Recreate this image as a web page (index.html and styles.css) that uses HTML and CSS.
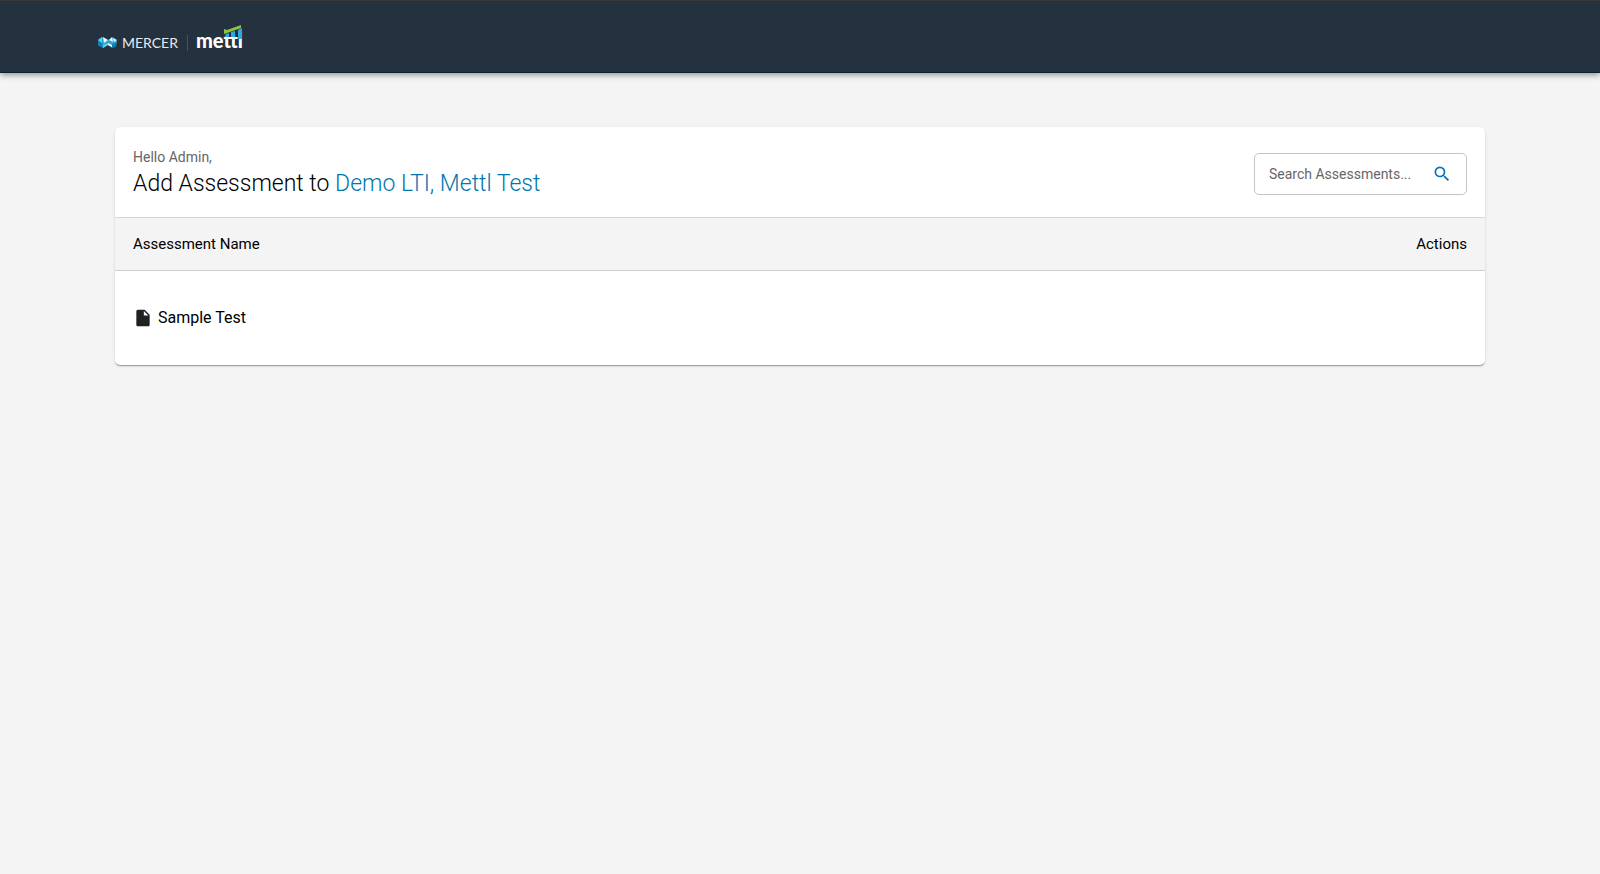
FILE: index.html
```html
<!DOCTYPE html>
<html lang="en">
<head>
<meta charset="utf-8">
<meta name="viewport" content="width=device-width, initial-scale=1">
<title>Add Assessment</title>
<link rel="stylesheet" href="styles.css">
</head>
<body>
<header class="topbar">
  <svg class="logo" width="148" height="32" viewBox="0 0 148 32" role="img" aria-label="Mercer Mettl">
    <path fill="#25a5d6" d="M0 14l4-3 6 3 5-3 4 4-1 5-4 2-4-3-5 3-5-3z"/>
    <path fill="#0f7fb5" d="M0 14l4 3 1 5-5-3zM14 18l4-1v3l-4 2z"/>
    <path fill="#5fcbea" d="M0 14l4-3v6zM5 19l5-2v2l-5 3z"/>
    <path fill="#f2fbff" d="M5 11l5 3-4 3zM11 14l3-3 1 5zM15 12l4 2-3 2zM10 17l4 2v2l-4-2z"/>
    <text class="logo-mercer" x="24" y="22">MERCER</text>
    <path stroke="#46535f" d="M89.500 9v16"/>
    <text class="logo-mettl" x="98" y="22">mettl</text>
    <path fill="#2ba9e0" d="M128 8l3-1v4h-3zM133 6l4-1v6h-4zM140 4l4-2v11h-4z"/>
    <path fill="#8cc63f" d="M126 3l3 1 14-5v3l-14 5-3 1z"/>
  </svg>
</header>
<main class="page">
  <section class="card">
    <div class="card-head">
      <div>
        <p class="greeting">Hello Admin,</p>
        <h1 class="title">Add Assessment to <span class="context">Demo LTI, Mettl Test</span></h1>
      </div>
      <form class="search" role="search">
        <input class="search-input" type="text" aria-label="Search Assessments" placeholder="Search Assessments...">
        <button class="search-button" type="button" aria-label="Search">
          <svg width="20" height="20" viewBox="0 0 24 24" fill="currentColor" aria-hidden="true"><path d="M15.500 14h-.79l-.28-.27A6.471 6.471 0 0 0 16 9.500 6.500 6.500 0 1 0 9.500 16c1.610 0 3.090-.59 4.230-1.570l.27.28v.79l5 4.990L20.490 19l-4.990-5zm-6 0C7.010 14 5 11.990 5 9.500S7.010 5 9.500 5 14 7.010 14 9.500 11.990 14 9.500 14z"/></svg>
        </button>
      </form>
    </div>
    <table class="table">
      <thead>
        <tr><th scope="col">Assessment Name</th><th class="actions" scope="col">Actions</th></tr>
      </thead>
      <tbody>
        <tr>
          <td>
            <span class="item">
              <svg width="20" height="20" viewBox="0 0 24 24" fill="#212121" aria-hidden="true"><path d="M6 2c-1.100 0-1.990.9-1.990 2L4 20c0 1.100.89 2 1.990 2H18c1.100 0 2-.9 2-2V8l-6-6H6zm7 7V3.500L18.500 9H13z"/></svg>
              Sample Test
            </span>
          </td>
          <td></td>
        </tr>
      </tbody>
    </table>
  </section>
</main>
</body>
</html>
```
FILE: styles.css
```css
* {
  box-sizing: border-box;
}

body {
  margin: 0;
  background: #f4f4f4;
  color: #000;
  font-family: Roboto, "Liberation Sans", sans-serif;
}

.topbar {
  display: flex;
  height: 73px;
  padding: 25px 98px 0;
  background: #24313e;
  border-top: 1px solid #353a39;
  border-bottom: 1px solid #0a2038;
  box-shadow: 0 2px 6px rgba(0, 0, 0, 0.4);
}

.logo {
  overflow: visible;
}

.logo-mercer {
  fill: #e8ebee;
  font: 14px Lato, sans-serif;
}

.logo-mettl {
  fill: #fff;
  font: 900 20px Lato, sans-serif;
}

.page {
  padding: 54px 115px;
}

.card {
  background: #fff;
  border-radius: 5px;
  box-shadow: 0 2px 1px -1px rgba(0, 0, 0, 0.2), 0 1px 1px rgba(0, 0, 0, 0.14), 0 1px 3px rgba(0, 0, 0, 0.12);
}

.card-head {
  display: flex;
  justify-content: space-between;
  align-items: center;
  height: 90px;
  padding: 3px 18px 0;
}

.greeting {
  margin: 0;
  color: #666;
  font-size: 14px;
  line-height: 20px;
}

.title {
  margin: 0;
  font-size: 23px;
  font-weight: 300;
  line-height: 34px;
}

.context {
  color: #0077ad;
}

.search {
  display: flex;
  align-items: center;
  width: 213px;
  height: 42px;
  padding: 0 14px;
  border: 1px solid #c4c4c4;
  border-radius: 5px;
}

.search-input {
  flex: 1;
  min-width: 0;
  padding: 0;
  border: 0;
  outline: 0;
  background: none;
  font: 14px Roboto, sans-serif;
}

.search-input::placeholder {
  color: #666;
  opacity: 1;
}

.search-button {
  display: flex;
  padding: 0;
  border: 0;
  background: none;
  color: #0077b6;
}

.table {
  width: 100%;
  border-collapse: collapse;
}

.table th {
  height: 53px;
  padding: 0 18px;
  background: #f4f4f4;
  border-top: 1px solid #d6d6d6;
  border-bottom: 1px solid #d0d0d0;
  font-size: 15px;
  font-weight: 400;
  text-align: left;
}

.table .actions {
  text-align: right;
}

.table td {
  height: 94px;
  padding: 0 18px;
  font-size: 16px;
}

.item {
  display: flex;
  align-items: center;
  gap: 5px;
}
```
